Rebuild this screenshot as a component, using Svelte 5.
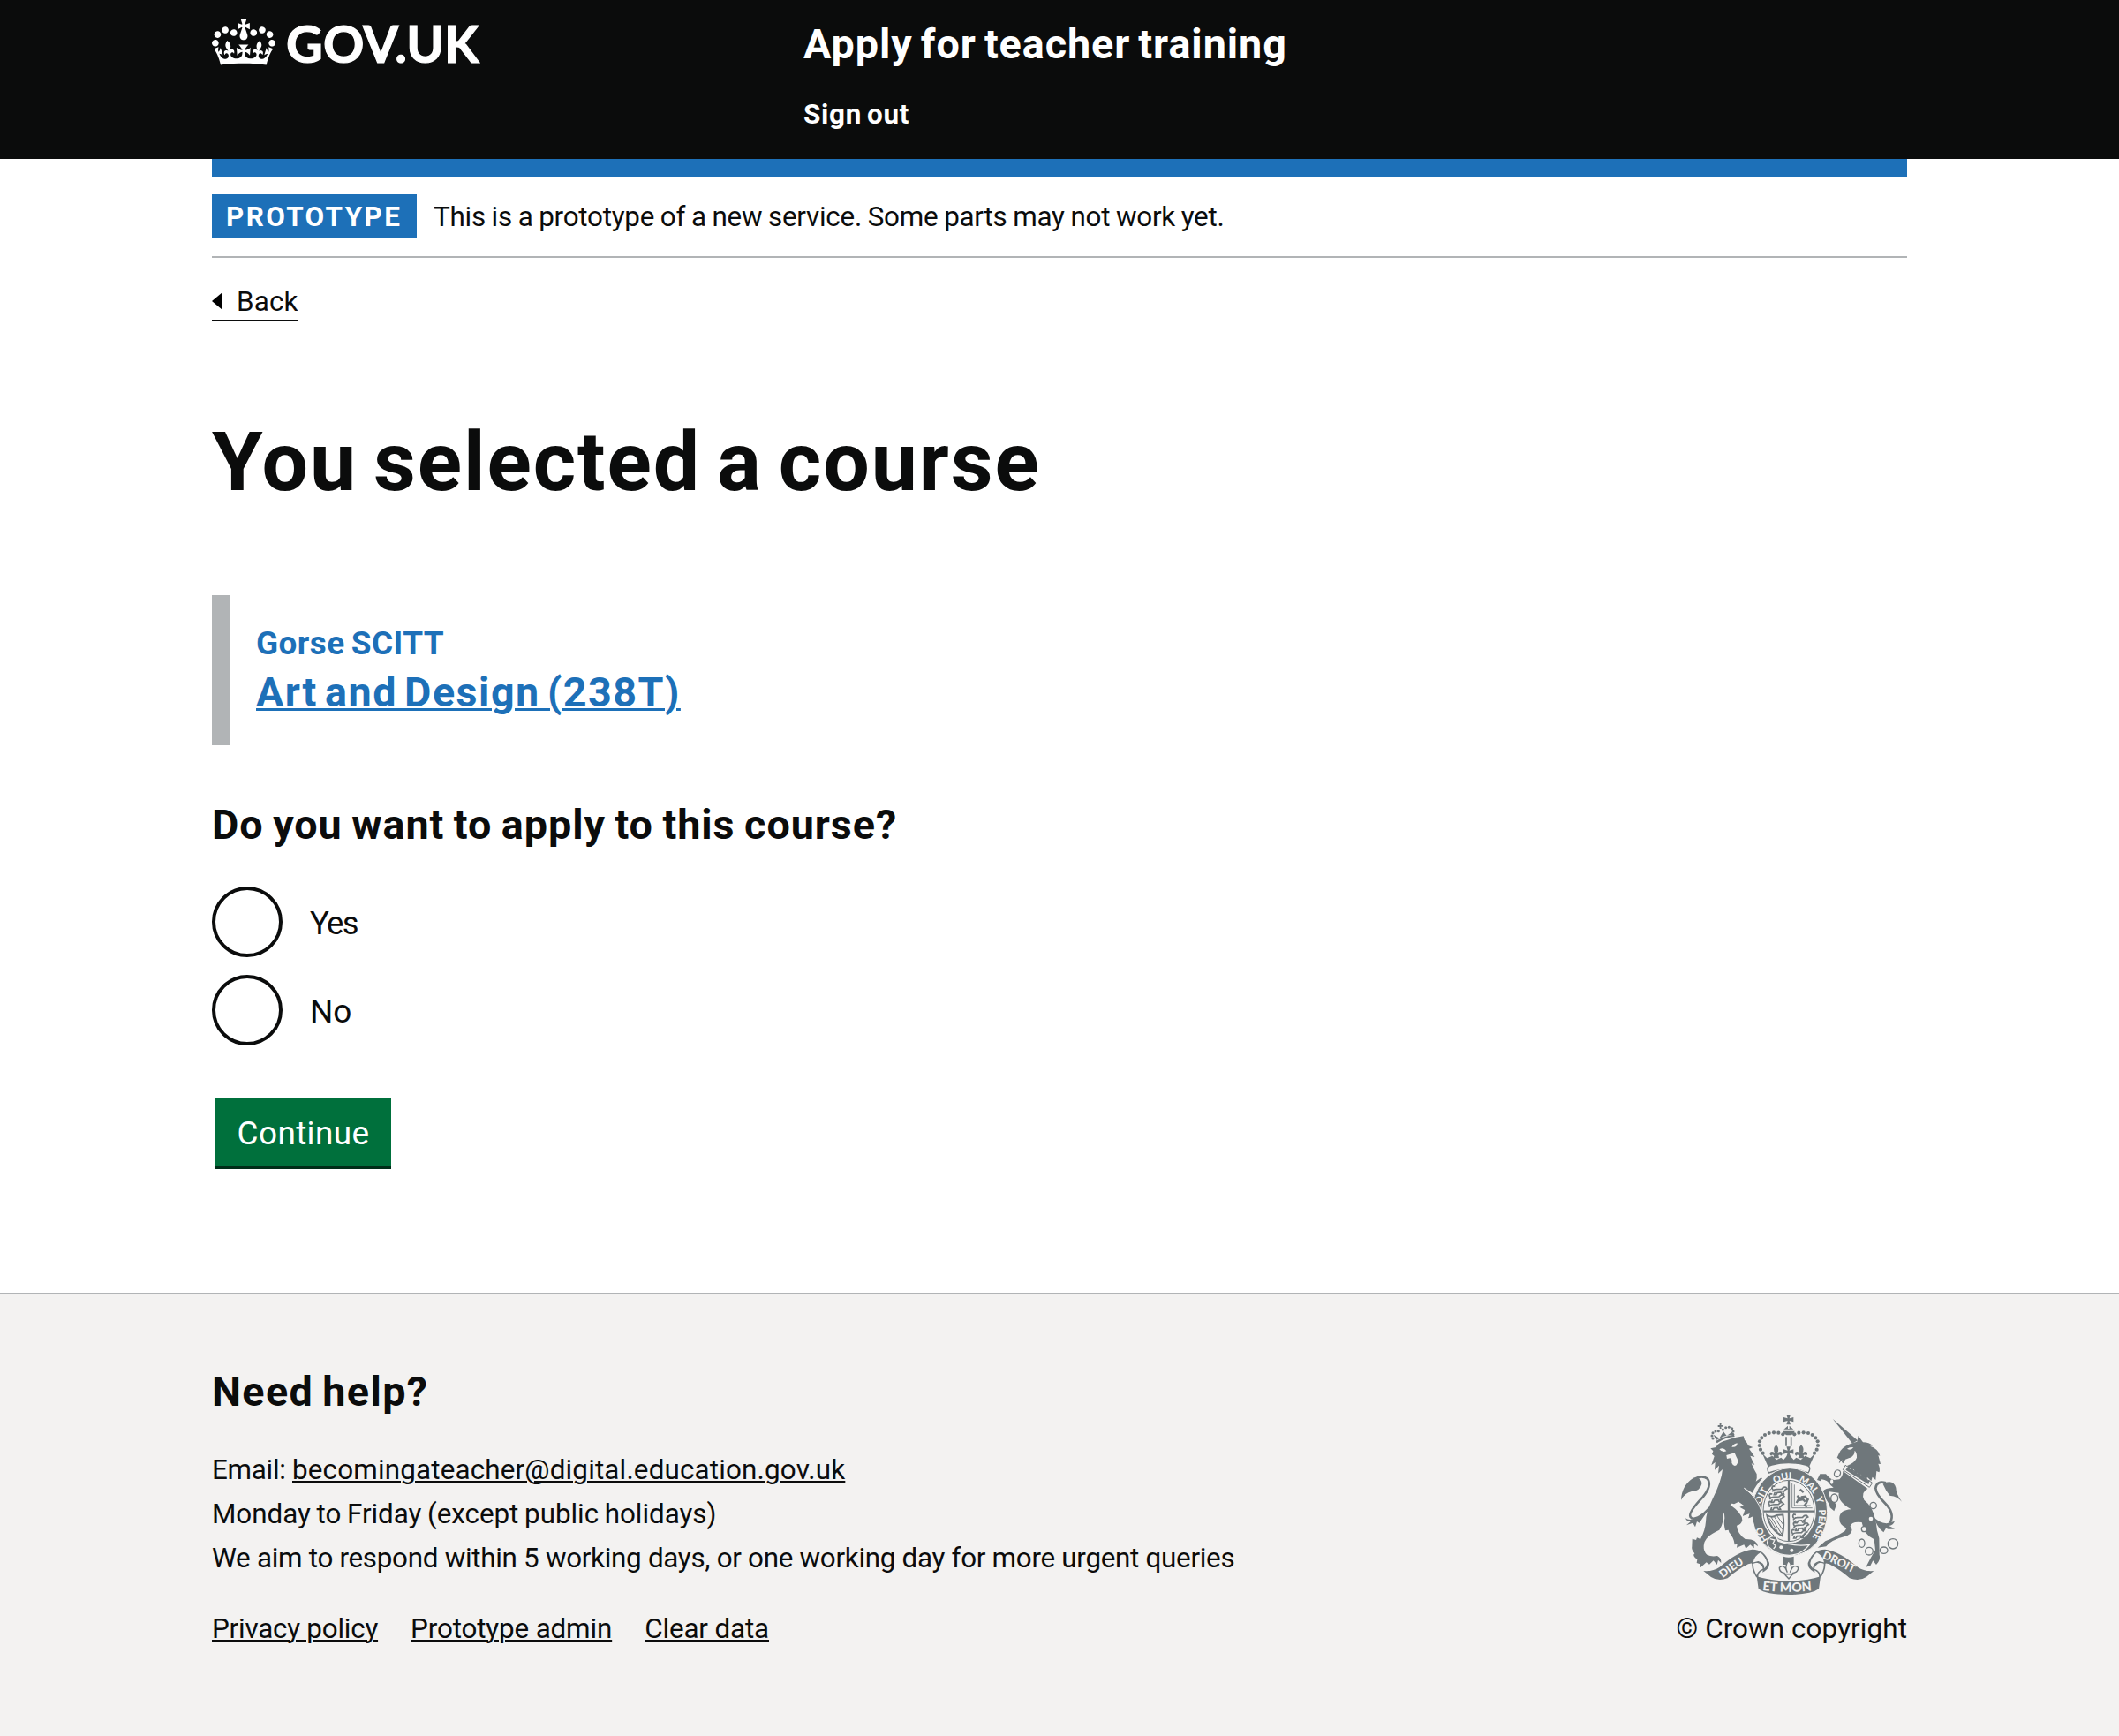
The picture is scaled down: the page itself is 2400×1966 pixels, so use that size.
<script>
  // Beads of the left arch of the royal crown; the right arch mirrors them.
  const beads = [
    [388, 103], [373, 98], [357, 97], [341, 99], [327, 105], [316, 115],
    [309, 127], [308, 141], [312, 155], [320, 167]
  ];
  const lionBeads = [[150, 117], [147, 108], [150, 98], [159, 93], [169, 92], [184, 87], [194, 80], [205, 79], [215, 83], [219, 93], [218, 103]];
  const options = ['Yes', 'No'];
  const footerLinks = [
    { label: 'Privacy policy', cls: 'privacy' },
    { label: 'Prototype admin', cls: 'admin' },
    { label: 'Clear data', cls: 'clear' }
  ];
</script>

<header class="header">
  <div class="width header-grid">
    <a class="logo" href="#home">
      <svg class="crown" viewBox="0 0 132 97" aria-hidden="true">
        <path fill="currentColor" fill-rule="evenodd" d="M25 30.2c3.5 1.5 7.7-.2 9.1-3.7 1.5-3.6-.2-7.8-3.9-9.2-3.6-1.4-7.6.3-9.1 3.9-1.4 3.5.3 7.5 3.9 9zM9 39.5c3.6 1.5 7.8-.2 9.2-3.7 1.5-3.6-.2-7.8-3.9-9.1-3.6-1.5-7.6.2-9.1 3.8-1.4 3.5.3 7.5 3.8 9zM4.4 57.2c3.5 1.5 7.7-.2 9.1-3.8 1.5-3.6-.2-7.7-3.9-9.1-3.5-1.5-7.6.3-9.1 3.8-1.4 3.5.3 7.6 3.9 9.1zm38.3-21.4c3.5 1.5 7.7-.2 9.1-3.8 1.5-3.6-.2-7.7-3.9-9.1-3.6-1.5-7.6.3-9.1 3.8-1.3 3.6.4 7.7 3.9 9.1zm64.4-5.6c-3.6 1.5-7.8-.2-9.1-3.7-1.5-3.6.2-7.8 3.8-9.2 3.6-1.4 7.7.3 9.2 3.9 1.3 3.5-.4 7.5-3.9 9zm15.9 9.3c-3.6 1.5-7.7-.2-9.1-3.7-1.5-3.6.2-7.8 3.7-9.1 3.6-1.5 7.7.2 9.2 3.8 1.5 3.5-.3 7.5-3.8 9zm4.7 17.7c-3.6 1.5-7.8-.2-9.2-3.8-1.5-3.6.2-7.7 3.9-9.1 3.6-1.5 7.7.3 9.2 3.8 1.3 3.5-.4 7.6-3.9 9.1zM89.3 35.8c-3.6 1.5-7.8-.2-9.2-3.8-1.4-3.6.2-7.7 3.9-9.1 3.6-1.5 7.7.3 9.2 3.8 1.4 3.6-.3 7.7-3.9 9.1zM69.7 17.7l8.9 4.7V9.3l-8.9 2.8c-.2-.3-.5-.6-.9-.9L72.4 0H59.6l3.5 11.2c-.3.3-.6.5-.9.9l-8.8-2.8v13.1l8.8-4.7c.3.3.6.7.9.9l-5 15.4v.1c-.2.8-.4 1.6-.4 2.4 0 4.1 3.1 7.5 7 8.1h.2c.3 0 .7.1 1 .1.4 0 .7 0 1-.1h.2c4-.6 7.1-4.1 7.1-8.1 0-.8-.1-1.7-.4-2.4V34l-5.1-15.4c.4-.2.7-.6 1-.9zM66 92.8c16.9 0 32.8 1.1 47.1 3.2 4-16.9 8.9-26.7 14-33.5l-9.6-3.4c1 4.9 1.1 7.2 0 10.2-1.5-1.4-3-4.3-4.2-8.7L108.6 76c2.8-2 5-3.2 7.5-3.3-4.4 9.4-10 11.9-13.6 11.2-4.3-.8-6.3-4.6-5.6-7.9 1-4.7 5.7-5.9 8-.5 4.3-8.7-3-11.4-7.6-8.8 7.1-7.2 7.9-13.5 2.1-21.1-8 6.1-8.1 12.3-4.5 20.8-4.7-5.4-12.1-2.5-9.5 6.2 3.4-5.2 7.9-2 7.2 3.1-.6 4.3-6.4 7.8-13.5 7.2-10.3-.9-10.9-8-11.2-13.8 2.5-.5 7.1 1.8 11 7.3L80.2 60c-4.1 4.4-8 5.3-12.3 5.4 1.4-4.4 8-11.6 8-11.6H55.5s6.4 7.2 7.9 11.6c-4.2-.1-8-1-12.3-5.4l1.4 16.4c3.9-5.5 8.5-7.7 10.9-7.3-.3 5.8-.9 12.8-11.1 13.8-7.2.6-12.9-2.9-13.5-7.2-.7-5 3.8-8.3 7.1-3.1 2.7-8.7-4.6-11.6-9.4-6.2 3.7-8.5 3.6-14.7-4.6-20.8-5.8 7.6-5 13.9 2.2 21.1-4.7-2.6-11.9.1-7.7 8.8 2.3-5.5 7.1-4.2 8.1.5.7 3.3-1.3 7.1-5.7 7.9-3.5.7-9-1.8-13.5-11.2 2.5.1 4.7 1.3 7.5 3.3l-4.7-15.4c-1.2 4.4-2.7 7.2-4.3 8.7-1.1-3-.9-5.3 0-10.2l-9.5 3.4c5 6.9 9.9 16.7 14 33.5 14.8-2.1 30.8-3.2 47.7-3.2z" />
      </svg>
      <span class="logo-text">GOV.UK</span>
    </a>
    <div class="header-content">
      <a class="service" href="#service">Apply for teacher training</a>
      <nav><a class="signout" href="#signout">Sign out</a></nav>
    </div>
  </div>
</header>

<div class="width body">
  <div class="bar"></div>
  <div class="phase">
    <strong class="tag">PROTOTYPE</strong>
    <span class="phase-text">This is a prototype of a new service. Some parts may not work yet.</span>
  </div>
  <a class="back" href="#back">
    <svg class="arrow" viewBox="0 0 12 20" aria-hidden="true"><path d="M12 0v20L0 10z" /></svg>
    <span>Back</span>
  </a>

  <main>
    <h1>You selected a course</h1>
    <div class="inset">
      <div class="provider">Gorse SCITT</div>
      <a class="course" href="#course">Art and Design (238T)</a>
    </div>
    <form>
      <h2 class="question">Do you want to apply to this course?</h2>
      <div class="radios">
        {#each options as option}
          <label class="radio">
            <input type="radio" name="apply" value={option} />
            <span class={option === 'Yes' ? 'yes' : 'no'}>{option}</span>
          </label>
        {/each}
      </div>
      <button type="button">Continue</button>
    </form>
  </main>
</div>

<footer>
  <div class="width footer-row">
    <div class="help">
      <h2>Need help?</h2>
      <ul class="contact">
        <li><span class="prefix">Email:&nbsp;</span><a class="email" href="#email">becomingateacher@digital.education.gov.uk</a></li>
        <li class="hours">Monday to Friday (except public holidays)</li>
        <li class="aim">We aim to respond within 5 working days, or one working day for more urgent queries</li>
      </ul>
      <div class="links">
        {#each footerLinks as link}
          <a class={link.cls} href="#{link.cls}">{link.label}</a>
        {/each}
      </div>
    </div>
    <div class="copyright">
      <svg class="crest" viewBox="42 36 750 612" aria-hidden="true">
        <defs>
          <path id="garter" d="M360 481A100 121 0 1 1 466 477" />
          <path id="mottoLeft" d="M184 592Q240 548 292 522" />
          <path id="mottoRight" d="M520 523Q570 545 650 586" />
          <path id="mottoMid" d="M318 632Q407 644 500 632" />
          <g id="passant">
            <path d="M2 22q5-8 12-8l20-1q6-8 14-6l4 5-6 3q-2 6-8 8l3 7h-7l-3-6-12 1-4 7h-7l3-9M4 16Q-2 8 4 3l7 1" fill="none" stroke="currentColor" stroke-width="5" />
          </g>
          <g id="fleur">
            <path d="M0-20Q-14-4-3 10Q-12 0-20 6Q-24 14-16 18Q-14 12-8 16L-10 26H10L8 16Q14 12 16 18Q24 14 20 6Q12 0 3 10Q14-4 0-20z" />
          </g>
          <g id="pattee">
            <path d="M-7-17H7L3-4L17-8V8L3 4L7 17H-7L-3 4L-17 8V-8L-3-4z" />
          </g>
        </defs>

        <g fill="currentColor">
          <!-- lion -->
          <path d="M142 151L160 147Q166 130 200 122Q232 112 254 109L258 122Q268 132 270 141L286 147L273 152Q284 166 292 180L277 176Q284 192 292 207L281 202Q290 224 299 238Q301 252 296 263L314 250L318 253Q296 276 284 302L254 283L300 324Q314 352 316 376L308 382L311 396L300 385L292 394L287 382L271 388L276 370L267 372L252 380L262 362L241 350L258 344L238 332L222 340Q212 336 209 343Q250 372 250 395Q246 410 231 413Q233 440 260 459Q300 458 303 484L290 474L290 490L277 478L262 491L256 478L231 488L233 476L224 478Q222 455 205 436L203 428L192 430Q186 405 190 388Q190 372 184 362Q190 400 172 428Q120 450 119 482Q118 500 130 512Q145 520 165 516Q180 524 178 540L168 530L164 546L152 532L138 545L128 538L108 556L106 544L95 540L97 528Q78 515 88 508Q76 494 79 484L80 458L93 462L96 454L108 459Q124 430 126 400Q126 370 148 325Q180 260 183 222L168 236L171 209L156 224L158 198L145 208L155 177L147 170L151 160z" />
          <path d="M159 126Q190 108 222 104L224 111Q190 114 164 133z" />
          <path d="M161 123L152 104L172 116L186 94L197 108L217 94L218 105Q190 104 161 123z" />
          <path d="M173 66h6l-1 6h6v5h-6l1 7h-6v-6h-6v-6h6z" />
          {#each lionBeads as [x, y]}<circle cx={x} cy={y} r="4.6" />{/each}
          <path d="M42 326Q44 276 84 251Q112 246 112 272Q106 296 78 297Q55 302 42 326zM57 388Q70 398 92 388L126 372L104 404L96 399L90 418L82 404L60 412L74 400Q60 398 57 388z" />
          <path d="M84 256Q112 240 132 254Q148 276 116 316Q64 370 74 384Q84 398 118 374L140 352" fill="none" stroke="currentColor" stroke-width="8" />

          <!-- unicorn -->
          <path d="M557 50L642 124L624 134z" />
          <path d="M572 182Q578 168 584 158Q600 140 624 133L640 128L644 108L660 130Q682 130 693 142L684 143Q712 152 718 176L712 174L720 204L712 203Q720 222 715 232L706 228L703 258L692 248L688 262L676 250L664 252L650 238L640 242L628 222L612 220L606 210Q634 198 639 182Q640 165 632 158Q632 178 612 184L600 188L594 202L588 198L590 190L578 202L582 190z" />
          <path d="M592 228L676 288Q652 300 664 326Q694 348 704 400Q706 430 715 456L716 512Q722 528 705 546L694 532L685 550L670 554L688 520L702 496L698 460Q664 446 656 402Q620 398 617 416Q632 434 606 448Q550 462 535 484L506 488L532 466Q560 456 598 432L604 422Q578 410 580 388Q580 360 620 358Q572 330 578 302L546 298Q540 304 550 320L570 342L562 364L548 352L546 342Q530 320 524 296Q530 286 560 284L550 276Q540 258 520 256L516 262L504 258L514 238L534 238Q548 256 562 258L580 256Q592 246 592 228z" />
          <path d="M600 208L692 268L682 283L592 224z" fill="#f3f2f1" stroke="currentColor" stroke-width="3" />
          <path d="M604 220l7-8 5 10 9-5 3 12 9-4 3 11 10-4 2 12 10-4 2 11 9-4 2 12 8-1-4 15-78-49z" />
          <path d="M734 268Q764 256 772 284Q772 304 792 332Q772 310 752 312Q738 296 728 272zM694 382Q714 404 740 406L768 398Q762 412 748 414L768 424Q750 428 738 422L730 436Q714 424 708 410z" />
          <path d="M738 268Q706 260 703 286Q704 306 734 336Q770 372 752 404" fill="none" stroke="currentColor" stroke-width="8" />

          <!-- crown -->
          <use href="#pattee" x="407" y="53" />
          <path d="M391 86L405 74V84H410V74L424 86zM388 92H428Q424 106 408 106Q392 106 388 92z" />
          <path d="M399 112V143M416 112V143" stroke="currentColor" stroke-width="5" />
          {#each beads as [x, y]}
            <circle cx={x} cy={y} r="6.2" />
            <circle cx={815 - x} cy={y} r="6.2" />
          {/each}
          <path d="M338 214L318 168L334 184L352 176L366 190L382 182L390 190L407 170L425 190L433 182L449 190L463 176L481 184L497 168L477 214Q407 190 338 214z" />
          <use href="#fleur" x="365" y="158" />
          <use href="#fleur" x="450" y="158" />
          <use href="#pattee" x="407" y="162" />
          <path d="M350 207Q407 192 465 207Q488 212 474 234Q407 210 340 234Q328 212 350 207z" fill="#f3f2f1" stroke="currentColor" stroke-width="4" />
        </g>

        <!-- garter and shield -->
        <ellipse cx="411" cy="367" rx="128" ry="149" fill="currentColor" stroke="#f3f2f1" stroke-width="3" />
        <ellipse cx="408" cy="363" rx="93" ry="110" fill="#f3f2f1" />
        <ellipse cx="408" cy="363" rx="87" ry="104" fill="none" stroke="currentColor" stroke-width="3" />
        <path d="M408 260V466M322 365H496" stroke="currentColor" stroke-width="7" />
        <path d="M419 268V353H488M427 274V345H482" fill="none" stroke="currentColor" stroke-width="2.5" />
        <g stroke-width="7">
          <use href="#passant" x="350" y="276" />
          <use href="#passant" x="341" y="302" />
          <use href="#passant" x="339" y="328" />
          <use href="#passant" x="421" y="372" />
          <use href="#passant" x="423" y="398" />
          <use href="#passant" x="417" y="424" />
        </g>
        <path d="M434 336l8-14 12-2 10 12-8-8-8 2 4-10 12-2 8 12-4 10-6 8 8 6M446 320l-10-8M458 300l-12-10M466 326l10-4" fill="none" stroke="currentColor" stroke-width="7" />
        <path d="M334 378Q352 388 366 378L388 376Q394 410 386 448Q346 430 334 378z" fill="none" stroke="currentColor" stroke-width="6" />
        <path d="M348 384L384 442M358 382L386 426M368 380L388 408M342 388L370 434" stroke="currentColor" stroke-width="3" />
        <g class="motto garter-motto" fill="#f3f2f1">
          <text><textPath href="#garter" startOffset="5%">HO</textPath></text>
          <text><textPath href="#garter" startOffset="23.5%">SOIT</textPath></text>
          <text><textPath href="#garter" startOffset="41.5%">QUI</textPath></text>
          <text><textPath href="#garter" startOffset="56%">MAL</textPath></text>
          <text><textPath href="#garter" startOffset="70.5%">Y</textPath></text>
          <text><textPath href="#garter" startOffset="77.5%">PENSE</textPath></text>
        </g>
        <path d="M340 456Q352 444 366 452L372 466Q430 486 478 478Q452 512 410 514Q376 514 352 496L340 486Q330 470 340 456z" fill="currentColor" stroke="#f3f2f1" stroke-width="4" />
        <path d="M344 458l16 4-6 12 10 8-8 10" fill="none" stroke="#f3f2f1" stroke-width="4" />
        <circle cx="382" cy="487" r="6" fill="#f3f2f1" />
        <circle cx="418" cy="497" r="6" fill="#f3f2f1" />
        <path d="M240 334L262 350L252 380L276 372L271 388L287 382L292 394L300 385L311 396L316 376Q314 345 300 324L262 290z" fill="currentColor" />
        <path d="M256 286Q302 318 316 368" fill="none" stroke="#f3f2f1" stroke-width="3" />

        <!-- facial features -->
        <g fill="#f3f2f1">
          <path d="M172 154Q186 146 196 160Q182 166 172 154zM214 146Q222 134 233 133Q234 148 214 146z" />
          <path d="M196 174L224 166L230 180Q240 194 230 208Q220 214 214 200Q216 186 208 184L198 186z" />
          <path d="M606 152Q616 144 628 148Q618 160 606 152z" />
        </g>

        <!-- chain -->
        <g fill="#f3f2f1" stroke="currentColor" stroke-width="4">
          <ellipse cx="573" cy="236" rx="10" ry="12" transform="rotate(30 573 236)" />
          <ellipse cx="563" cy="320" rx="12" ry="14" />
          <circle cx="695" cy="345" r="11" />
          <circle cx="687" cy="390" r="9" />
          <circle cx="664" cy="425" r="9" />
          <ellipse cx="656" cy="473" rx="10" ry="14" />
          <circle cx="681" cy="500" r="13" />
          <ellipse cx="731" cy="497" rx="13" ry="11" />
          <circle cx="762" cy="475" r="17" />
          <ellipse cx="554" cy="264" rx="5" ry="8" stroke="none" />
        </g>

        <!-- ribbon -->
        <g fill="currentColor">
          <path d="M118 567Q150 570 172 555Q234 500 284 494Q326 494 342 540Q344 560 318 572Q326 556 308 542Q296 536 270 544Q230 564 200 592Q168 604 144 588Z" />
          <path d="M697 567Q665 570 643 555Q581 500 531 494Q489 494 473 540Q471 560 497 572Q489 556 507 542Q519 536 545 544Q585 564 615 592Q647 604 671 588Z" />
          <path d="M299 586Q350 602 407 601Q465 602 516 586L510 628Q484 648 407 648Q330 648 305 628z" />
        </g>
        <path d="M312 502Q332 520 336 540Q334 556 322 562Q326 542 304 536L284 541Q288 514 312 502zM503 502Q483 520 479 540Q481 556 493 562Q489 542 511 536L531 541Q527 514 503 502z" fill="#f3f2f1" stroke="currentColor" stroke-width="4" />
        <path d="M286 540Q282 560 300 588M529 540Q533 560 515 588M322 562Q300 570 302 588M493 562Q515 570 513 588" fill="none" stroke="currentColor" stroke-width="5" />
        <g class="motto" fill="#f3f2f1">
          <text class="dieu"><textPath href="#mottoLeft">DIEU</textPath></text>
          <text class="droit"><textPath href="#mottoRight">DROIT</textPath></text>
          <text class="mon"><textPath href="#mottoMid">ET MON</textPath></text>
        </g>

        <!-- pendant -->
        <path d="M390 518Q407 524 425 518V546H390z" fill="currentColor" />
        <path d="M407 532Q424 552 412 572Q424 540 440 556Q440 572 422 574L418 582L408 594L397 582L393 574Q375 572 376 556Q392 540 403 572Q392 552 407 532z" fill="#f3f2f1" stroke="currentColor" stroke-width="4" />
        <path d="M392 578H424" stroke="currentColor" stroke-width="5" />
      </svg>
      <a class="crown-copyright" href="#copyright">© Crown copyright</a>
    </div>
  </div>
</footer>

<style>
  :global(body) {
    margin: 0;
    background: #fff;
    color: #0b0c0c;
    font-family: Roboto, "Liberation Sans", sans-serif;
    font-size: 31.4px;
    line-height: 50px;
  }
  a { color: inherit; text-decoration: none; }
  h1, h2, ul { margin: 0; padding: 0; list-style: none; }
  .width { width: 1920px; margin: 0 auto; }

  .header { height: 180px; background: #0b0c0c; color: #fff; font-weight: 700; }
  .header-grid { display: grid; grid-template-columns: 670px 1fr; }
  .logo { display: flex; align-items: flex-start; gap: 12px; padding-top: 21px; }
  .crown { width: 72px; height: 53px; }
  .logo-text {
    font-family: Lato, sans-serif;
    font-size: 57.5px;
    line-height: 55px;
    letter-spacing: 0.2px;
    -webkit-text-stroke: 1.2px #fff;
  }
  .header-content { display: flex; flex-direction: column; padding-top: 20px; }
  .service { font-size: 46.7px; line-height: 60px; letter-spacing: 0.95px; word-spacing: -3.5px; }
  nav { margin-top: 30px; line-height: 40px; }
  .signout { letter-spacing: 0.7px; word-spacing: -2.5px; }

  .bar { height: 20px; background: #1d70b8; }
  .phase {
    display: flex;
    align-items: center;
    padding: 20px 0;
    border-bottom: 2px solid #b1b4b6;
    line-height: 50px;
  }
  .tag {
    box-sizing: border-box;
    width: 232px;
    height: 50px;
    margin-right: 19px;
    padding: 1px 0 0 16px;
    background: #1d70b8;
    color: #fff;
    font-weight: 700;
    letter-spacing: 2.4px;
  }
  .phase-text { padding-top: 1px; margin-bottom: -1px; letter-spacing: -0.25px; word-spacing: -0.8px; }
  .back {
    display: flex;
    align-items: center;
    margin-top: 29px;
    padding-bottom: 1px;
    border-bottom: 2px solid #0b0c0c;
    width: 98px;
    line-height: 40px;
    letter-spacing: 0.15px;
  }
  .back span { padding-top: 1px; margin-bottom: -1px; }
  .arrow { width: 12px; height: 20px; margin-right: 16px; }

  main { padding-top: 110px; }
  h1 { font-size: 93.1px; line-height: 100px; letter-spacing: 1.9px; word-spacing: -7px; font-weight: 700; }
  .inset {
    margin-top: 100px;
    padding: 30px;
    border-left: 20px solid #b1b4b6;
    color: #1d70b8;
    font-weight: 700;
  }
  .provider { font-size: 36.9px; line-height: 50px; letter-spacing: 0.45px; word-spacing: -2.5px; }
  .course {
    display: block;
    width: max-content;
    font-size: 46.7px;
    line-height: 60px;
    letter-spacing: 1.5px;
    word-spacing: -5px;
    text-decoration: underline;
    text-decoration-thickness: 3px;
    text-underline-offset: 2px;
  }
  h2 { font-size: 46.7px; line-height: 60px; font-weight: 700; }
  .question { margin-top: 60px; letter-spacing: 0.95px; word-spacing: -2px; }
  .radios { display: flex; flex-direction: column; gap: 20px; margin-top: 40px; }
  .radio { display: flex; align-items: center; gap: 31px; height: 80px; font-size: 36.9px; }
  .radio span { padding-top: 3px; }
  .radio .yes { font-size: 36.4px; letter-spacing: -1.6px; }
  input {
    appearance: none;
    box-sizing: border-box;
    width: 80px;
    height: 80px;
    margin: 0;
    border: 4px solid #0b0c0c;
    border-radius: 50%;
  }
  button {
    display: block;
    width: 199px;
    height: 76px;
    margin: 60px 0 0 4px;
    padding: 3px 0 0;
    border: 0;
    background: #00703c;
    box-shadow: 0 4px 0 #002d18;
    color: #fff;
    font: 36.9px/73px Roboto, "Liberation Sans", sans-serif;
    letter-spacing: 0.38px;
  }

  footer {
    box-sizing: border-box;
    height: 502px;
    margin-top: 144px;
    padding-top: 80px;
    border-top: 2px solid #b1b4b6;
    background: #f3f2f1;
  }
  .footer-row { display: flex; justify-content: space-between; align-items: flex-end; }
  .help h2 { letter-spacing: 1.4px; word-spacing: -3px; }
  .contact { margin-top: 34px; }
  .links { display: flex; gap: 37px; margin-top: 30px; }
  .email, .links a { text-decoration: underline; text-decoration-thickness: 2px; text-underline-offset: 2px; }
  .prefix { letter-spacing: -0.3px; }
  .email { letter-spacing: 0.16px; }
  .hours { letter-spacing: -0.05px; word-spacing: -1px; }
  .aim { letter-spacing: -0.3px; }
  .links .privacy { letter-spacing: -0.23px; }
  .links .admin { letter-spacing: -0.15px; }
  .links .clear { letter-spacing: -0.15px; }
  .copyright { display: flex; flex-direction: column; align-items: flex-end; }
  .crest { width: 250px; height: 204px; margin: 0 6px 14px 0; color: #6f777b; }
  .crown-copyright { letter-spacing: 0.09px; }
  .motto { font-family: Lato, sans-serif; font-weight: 900; font-size: 38px; }
  .garter-motto { font-size: 32px; }
  .dieu { font-size: 37px; }
  .droit { font-size: 38px; }
  .mon { font-size: 43px; }
</style>
